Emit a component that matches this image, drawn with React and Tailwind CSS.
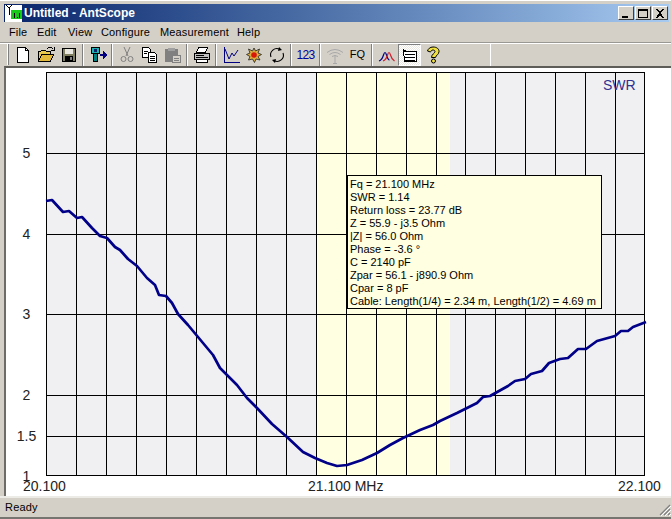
const UI = { fontFamily: '"Liberation Sans", sans-serif' };

const VLINES = [46,76,106,136,166,196,226,256,286,316,346,376,406,436,465,495,525,555,585,615,644];
const HLINES = [72,153,234,314,395,436,475];
const YLABELS = [["5",153],["4",234],["3",314],["2",395],["1.5",436],["1",476]];
const CURVE = "46,201 52,200 63,212 69,211 77,218 82,217 92,228 100,236 107,238 115,247 120,250 128,259 137,266 147,278 155,285 159,295 166,296 172,303 178,314 188,325 198,337 213,355 220,368 227,375 237,385 247,398 257,408 272,424 287,437 303,452 315,458 327,463 337,466 347,465 362,460 377,453 390,445 403,438 420,430 433,425 440,421 457,413 477,403 483,397 490,396 508,386 515,381 525,379 531,374 542,371 549,363 560,359 568,358 578,349 586,349 597,341 615,336 621,331 628,331 633,327 646,322";
const INFO = ["Fq = 21.100 MHz","SWR = 1.14","Return loss = 23.77 dB","Z = 55.9 - j3.5 Ohm","|Z| = 56.0 Ohm","Phase = -3.6 °","C = 2140 pF","Zpar = 56.1 - j890.9 Ohm","Cpar = 8 pF","Cable: Length(1/4) = 2.34 m, Length(1/2) = 4.69 m"];

const Ic = ({ children }) => (
  <svg width="18" height="18" viewBox="0 0 18 18" shapeRendering="crispEdges">{children}</svg>
);

const icons = {
  new: <Ic><path d="M3.5 1.5h8l3 3v12h-11z" fill="#fff" stroke="#000"/><path d="M11.5 1.5v3h3" fill="none" stroke="#000"/></Ic>,
  open: <Ic><path d="M1.5 15.5v-10h2l1-1h4l1 1h4v3" fill="#e8c84a" stroke="#000"/><path d="M1.5 15.5l3-7h12l-3 7z" fill="#e2b93b" stroke="#000"/><path d="M10 3c2-2 4-2 5-1l1.500 1.500M17 1v3h-3" fill="none" stroke="#000"/></Ic>,
  save: <Ic><rect x="2.500" y="2.500" width="13" height="13" fill="#808060" stroke="#000"/><rect x="5" y="3" width="8" height="5" fill="#e8e8e0"/><rect x="5" y="10" width="8" height="5" fill="#000"/><rect x="10" y="11" width="2" height="3" fill="#808080"/></Ic>,
  connect: <Ic><rect x="2.500" y="1.500" width="8" height="6" fill="#20b0b0" stroke="#000"/><rect x="4.500" y="7.500" width="4" height="8" fill="#008080" stroke="#000"/><rect x="5" y="3" width="3" height="3" fill="#0a246a"/><path d="M11 8h3V5l4 4-4 4v-3h-3z" fill="#000080"/></Ic>,
  cut: <Ic><path d="M6 1l4 9M12 1l-4 9" stroke="#808080" fill="none" shapeRendering="auto"/><circle cx="5.500" cy="13" r="2.500" fill="none" stroke="#808080" shapeRendering="auto"/><circle cx="12.500" cy="13" r="2.500" fill="none" stroke="#808080" shapeRendering="auto"/></Ic>,
  copy: <Ic><path d="M1.500 1.500h6l2 2v8h-8z" fill="#fff" stroke="#000"/><path d="M7.500 6.500h6l2 2v8h-8z" fill="#fff" stroke="#000"/><path d="M3 5h4M3 7h3M9 10h5M9 12h5M9 14h5" stroke="#000"/></Ic>,
  paste: <Ic><rect x="1.500" y="3.500" width="12" height="12" fill="#808080" stroke="#808080"/><rect x="4" y="2" width="7" height="3" fill="#a0a0a0"/><path d="M8.500 9.500h8v7h-8z" fill="#d4d0c8" stroke="#808080"/><path d="M10 12h5M10 14h5" stroke="#808080"/></Ic>,
  print: <Ic><path d="M5.500 1.500h9l-2 5h-9z" fill="#fff" stroke="#000"/><path d="M1.500 7.500h15v6h-15z" fill="#c0c0c0" stroke="#000"/><path d="M3.500 13.500h11v3h-11z" fill="#fff" stroke="#000"/><path d="M3 9.500h8M3 11h12" stroke="#000"/></Ic>,
  chart: <Ic><path d="M2.500 1v15h15" fill="none" stroke="#000080"/><path d="M3 3l4 10 3-6 2 3 4-6" fill="none" stroke="#000080" shapeRendering="auto"/></Ic>,
  burst: <Ic><path d="M9 2l1.500 3 4-2-1.500 4 3.500 1.500-3.500 2 2 3.500-4-1-1.500 3.500-2-3.500-4 1 1.500-3.500-3.500-2 3.500-1.500-1.500-4 4 2z" fill="#dcb040" stroke="#222" strokeWidth=".8" shapeRendering="auto"/><circle cx="9" cy="9" r="2.800" fill="#d81808" shapeRendering="auto"/></Ic>,
  refresh: <Ic><path d="M3 11a6.200 6.200 0 0 1 9-7.500M15 7a6.200 6.200 0 0 1-9 7.500" fill="none" stroke="#000" strokeWidth="1.100" shapeRendering="auto"/><path d="M11 1l3 3-4 1zM7 17l-3-3 4-1z" fill="#000" shapeRendering="auto"/></Ic>,
  wifi: <Ic><path d="M1 6.500q8-6 16 0M3.500 8.500q5.500-4 11 0M6 10.500q3-2 6 0M9 9v8" fill="none" stroke="#a8a8a8" shapeRendering="auto"/><path d="M7 17h4" stroke="#a8a8a8"/></Ic>,
  peaks: <Ic><path d="M1 15q3-1 4.500-6 1.500-5 3 0 1.500 5 3 5" fill="none" stroke="#000080" strokeWidth="1.200" shapeRendering="auto"/><path d="M5 15q3-1 4.500-6 1.500-5 3 0 1 4 4 6" fill="none" stroke="#d02030" strokeWidth="1.200" shapeRendering="auto"/></Ic>,
  list: <Ic><path d="M2.500 3.500l3 2h10v10h-12z" fill="#fff" stroke="#000"/><path d="M4 8h10M4 11h10M4 14h10" stroke="#000"/><path d="M3 5h12v1H3z" fill="#000"/></Ic>,
  help: <Ic><path d="M9 1c4 0 6 2 6 4.500 0 3-3 3.500-3.500 6h-4C7.500 8 11 7.500 11 5.500c0-1-1-1.500-2-1.500-1.500 0-2 1-2.500 2l-3-1C4 3 6 1 9 1z" fill="#f0e040" stroke="#000" shapeRendering="auto"/><circle cx="9.500" cy="15" r="2" fill="#f0e040" stroke="#000" shapeRendering="auto"/></Ic>,
};

const Btn = ({ children, pressed }) => (
  <div className={`flex h-[22px] w-[23px] items-center justify-center ${pressed ? "border border-t-[#808080] border-l-[#808080] border-r-white border-b-white bg-[repeating-conic-gradient(#ffffff_0_25%,#ece9e2_0_50%)] bg-[length:2px_2px]" : ""}`}>
    {children}
  </div>
);
const Sep = () => (
  <div className="flex h-[22px] w-[6px] justify-center">
    <div className="h-full w-[2px] border-l border-r border-l-[#808080] border-r-white" />
  </div>
);

const CapBtn = ({ children }) => (
  <div className="flex h-[14px] w-[16px] items-center justify-center border border-t-white border-l-white border-r-[#404040] border-b-[#404040] bg-[#d4d0c8]">
    <svg width="10" height="9" viewBox="0 0 10 9" shapeRendering="crispEdges">{children}</svg>
  </div>
);

export default function App() {
  return (
    <div style={UI} className="flex h-[519px] w-[671px] flex-col overflow-hidden border-t border-t-white bg-[#d4d0c8] pt-[3px] text-black">
      {/* title bar */}
      <div className="flex h-[18px] items-center bg-gradient-to-r from-[#0a246a] to-[#a6caf0] ml-[4px] mr-[2px] pr-[1px]">
        <svg width="18" height="18" viewBox="0 0 18 18" shapeRendering="crispEdges" className="mr-[2px] shrink-0">
          <rect x="1" y="1" width="17" height="17" fill="#fff" />
          <path d="M2 1l3 3 3-3M5 4v7" stroke="#000" fill="none" />
          <rect x="7" y="6" width="11" height="9" fill="#18c818" />
          <rect x="10" y="9" width="1" height="5" fill="#000" />
          <rect x="13" y="13" width="1" height="1" fill="#000" />
          <rect x="15" y="9" width="1" height="5" fill="#000" />
        </svg>
        <span className="text-[12px] font-bold text-white">Untitled - AntScope</span>
        <div className="ml-auto flex">
          <CapBtn><rect x="1" y="7" width="6" height="2" fill="#000" /></CapBtn>
          <div className="w-[1px]" />
          <CapBtn><path d="M.5 1.500h9v7h-9z" fill="none" stroke="#000" /><rect x="0" y="0" width="10" height="2" fill="#000" /></CapBtn>
          <div className="w-[1px]" />
          <CapBtn><path d="M1 0l2 0 2 3 2-3 2 0-3 4 3 5-2 0-2-3-2 3-2 0 3-5z" fill="#000" /></CapBtn>
        </div>
      </div>

      {/* menu */}
      <div className="flex h-[20px] items-center pl-[9px] text-[11px] leading-none tracking-[0.15px]">
        <span className="w-[28px]">File</span>
        <span className="w-[31px]">Edit</span>
        <span className="w-[33px]">View</span>
        <span className="w-[59px]">Configure</span>
        <span className="w-[77px]">Measurement</span>
        <span>Help</span>
      </div>

      {/* toolbar */}
      <div className="flex h-[24px] items-center border-t border-t-[#9a9892] pl-[7px] shadow-[inset_0_1px_0_#ffffff]">
        <div className="mr-[2px] h-[21px] w-[2px] border-l border-l-white bg-[#808080]" />
        <Btn>{icons.new}</Btn>
        <Btn>{icons.open}</Btn>
        <Btn>{icons.save}</Btn>
        <Sep />
        <Btn>{icons.connect}</Btn>
        <Sep />
        <Btn>{icons.cut}</Btn>
        <Btn>{icons.copy}</Btn>
        <Btn>{icons.paste}</Btn>
        <Sep />
        <Btn>{icons.print}</Btn>
        <Sep />
        <Btn>{icons.chart}</Btn>
        <Btn>{icons.burst}</Btn>
        <Btn>{icons.refresh}</Btn>
        <Sep />
        <Btn><span className="text-[12px] tracking-[-0.6px] text-[#0000a0]">123</span></Btn>
        <Sep />
        <Btn>{icons.wifi}</Btn>
        <Btn><span className="text-[11px] text-black">FQ</span></Btn>
        <Sep />
        <Btn>{icons.peaks}</Btn>
        <Btn pressed>{icons.list}</Btn>
        <Btn>{icons.help}</Btn>
        <div className="ml-[46px] h-[22px] w-[1px] bg-white" />
      </div>

      {/* client */}
      <div className="relative ml-[4px] h-[430px] border-t-2 border-l-2 border-t-[#5f5d58] border-l-[#6e6c66] bg-white">
        <svg viewBox="6 68 665 428" width="665" height="428" className="block" style={{ fontFamily: '"Liberation Sans", sans-serif' }}>
          <rect x="46" y="72" width="599" height="404" fill="#f0f0f2" />
          <rect x="317" y="72" width="133" height="404" fill="#ffffe1" />
          {VLINES.map((x) => <rect key={x} x={x} y="72" width="1" height="404" fill="#000" />)}
          {HLINES.map((y) => <rect key={y} x="46" y={y} width="599" height="1" fill="#000" />)}
          <polyline points={CURVE} fill="none" stroke="#000088" strokeWidth="2.7" strokeLinejoin="round" />
          {YLABELS.map(([t, y]) => (
            <text key={t} x="26.500" y={y + 5} textAnchor="middle" fontSize="14" fill="#222">{t}</text>
          ))}
          <text x="23" y="491" fontSize="14" fill="#222">20.100</text>
          <text x="308" y="491" fontSize="14" fill="#222">21.100 MHz</text>
          <text x="618" y="491" fontSize="14" fill="#222">22.100</text>
          <text x="603" y="90" fontSize="14" fill="#303090">SWR</text>
        </svg>
        <div className="absolute left-[341px] top-[107px] h-[134px] w-[255px] border border-black bg-[#ffffe1] pl-[2px] pt-[2px] text-[11px] leading-[13px] whitespace-nowrap">
          {INFO.map((l) => <div key={l}>{l}</div>)}
        </div>
      </div>

      {/* status bar */}
      <div className="relative flex h-[23px] items-center border-t-2 border-t-[#ecebe6] border-b-2 border-b-[#77756f] pl-[5px] text-[11px] tracking-[0.2px]">
        Ready
        <svg className="absolute bottom-[1px] right-0" width="13" height="13" viewBox="0 0 13 13">
          <path d="M12 2L2 12M12 6L6 12M12 10L10 12" stroke="#808080" strokeWidth="1.200" />
          <path d="M13 3L3 13M13 7L7 13M13 11L11 13" stroke="#fff" strokeWidth="1" />
        </svg>
      </div>
    </div>
  );
}
